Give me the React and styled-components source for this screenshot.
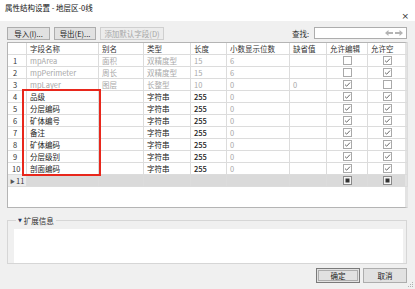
import React from "react";
import styled, { createGlobalStyle } from "styled-components";

const Global = createGlobalStyle`
  html, body { margin: 0; padding: 0; }
  body {
    width: 415px; height: 289px; overflow: hidden;
    background: #f0f0f0;
    font-family: "Noto Sans CJK SC", "Noto Sans", sans-serif;
    font-size: 7.5px;
    color: #222;
  }
  * { box-sizing: border-box; }
`;

const Window = styled.div`
  width: 415px;
  height: 289px;
  display: flex;
  flex-direction: column;
  background: #f0f0f0;
  position: relative;
`;

const TitleBar = styled.div`
  height: 21px;
  display: flex;
  align-items: flex-start;
  justify-content: space-between;
  padding: 3px 6px 0 5px;
  background: #ffffff;
  color: #111;
  font-size: 7.5px;
  line-height: 10px;
`;

const Close = styled.span`
  margin-top: 9px;
  font-size: 9px;
  line-height: 8px;
  color: #333;
  font-family: "DejaVu Sans", sans-serif;
`;

const Toolbar = styled.div`
  display: flex;
  align-items: center;
  gap: 4px;
  padding: 5px 8px 0 7px;
  height: 19px;
`;

const Btn = styled.button`
  height: 13px;
  width: ${(p) => p.$w}px;
  padding: 0;
  border: 1px solid ${(p) => (p.$disabled ? "#cfcfcf" : p.$default ? "#7a7a7a" : "#adadad")};
  outline: ${(p) => (p.$default ? "1px solid #adadad" : "none")};
  outline-offset: -3px;
  background: ${(p) => (p.$disabled ? "#ececec" : "#e1e1e1")};
  color: ${(p) => (p.$disabled ? "#a6a6a6" : "#222")};
  font-family: inherit;
  font-size: 7.5px;
  line-height: 11px;
`;

const Spacer = styled.div`
  flex: 1;
`;

const FindLabel = styled.span`
  color: #333;
  margin-right: 1px;
`;

const FindBox = styled.div`
  width: 93px;
  height: 12px;
  background: #fff;
  border: 1px solid #adadad;
  display: flex;
  align-items: center;
  justify-content: flex-end;
  padding-right: 3px;
  gap: 2px;
`;

const Table = styled.div`
  margin: 2px 7px 0 7px;
  height: 166px;
  background: #fff;
  border: 1px solid #b4b4b4;
  border-right: 3px solid #e3e3e3;
  display: flex;
  flex-direction: column;
  position: relative;
`;

const cols = "19px 72px 45px 47px 36px 63px 37px 41px 40px";

const Row = styled.div`
  display: grid;
  grid-template-columns: ${cols};
  height: 12px;
  background: ${(p) => (p.$new ? "#dadada" : "#fff")};
`;

const Cell = styled.div`
  border-right: 1px solid #dcdcdc;
  border-bottom: 1px solid #dcdcdc;
  padding-left: ${(p) => (p.$pl != null ? p.$pl : 3)}px;
  line-height: 11px;
  white-space: nowrap;
  overflow: hidden;
  color: ${(p) => p.$c || "#222"};
  font-weight: ${(p) => (p.$bold ? 500 : 400)};
  display: flex;
  align-items: center;
  justify-content: ${(p) => (p.$center ? "center" : "flex-start")};
  background: ${(p) => p.$bg || "transparent"};
`;

const HeadCell = styled(Cell)`
  color: #333;
`;

const Num = styled(Cell)`
  color: #333;
`;

const Arrow = styled.span`
  font-size: 5px;
  margin-left: -2px;
  margin-right: 1px;
  color: #555;
`;

const Annotation = styled.div`
  position: absolute;
  left: 14px;
  top: 46px;
  width: 79px;
  height: 87px;
  border: 2.5px solid #e8271c;
  pointer-events: none;
`;

const Group = styled.fieldset`
  margin: 8px 8px 0 7px;
  padding: 0 3px 3px 6px;
  height: 48px;
  border: 1px solid #d6d6d6;
  min-width: 0;
`;

const Legend = styled.legend`
  padding: 0 2px;
  margin-left: 2px;
  color: #333;
  line-height: 9px;
  display: flex;
  align-items: center;
  gap: 2px;
`;

const Tri = styled.span`
  font-size: 5px;
  color: #1d3566;
  font-family: "DejaVu Sans", sans-serif;
`;

const GroupBody = styled.div`
  background: #fff;
  height: 34px;
  margin-top: 4px;
`;

const Footer = styled.div`
  display: flex;
  justify-content: flex-end;
  gap: 3px;
  padding: 4px 8px 0 0;
`;

const FootBtn = styled(Btn)`
  height: 15px;
  line-height: 12px;
`;

const Grip = styled.svg`
  position: absolute;
  right: 1px;
  bottom: 1px;
`;

function Check({ on, mixed }) {
  return (
    <svg width="9" height="9" viewBox="0 0 9 9">
      <rect x="0.5" y="0.5" width="8" height="8" fill={mixed ? "#f4f4f4" : "#fff"} stroke={mixed ? "#8a8a8a" : "#a9a9a9"} />
      {on && <path d="M2 4.6 L3.7 6.2 L7 2.6" fill="none" stroke="#6a6a6a" strokeWidth="1" />}
      {mixed && <rect x="2.5" y="2.5" width="4" height="4" fill="#333" />}
    </svg>
  );
}

function NavArrow({ dir }) {
  const d = dir === "left" ? "M0 3 L3.5 0 L3.5 2 L8 2 L8 4 L3.5 4 L3.5 6 Z" : "M8 3 L4.5 0 L4.5 2 L0 2 L0 4 L4.5 4 L4.5 6 Z";
  return (
    <svg width="8" height="6" viewBox="0 0 8 6">
      <path d={d} fill="#b4b4b4" />
    </svg>
  );
}

const rows = [
  { n: 1, name: "mpArea", alias: "面积", type: "双精度型", len: "15", dec: "6", def: "", edit: false, nul: true, sys: true },
  { n: 2, name: "mpPerimeter", alias: "周长", type: "双精度型", len: "15", dec: "6", def: "", edit: false, nul: true, sys: true },
  { n: 3, name: "mpLayer", alias: "图层", type: "长整型", len: "10", dec: "0", def: "0", edit: true, nul: false, sys: true },
  { n: 4, name: "品级", alias: "", type: "字符串", len: "255", dec: "0", def: "", edit: true, nul: true },
  { n: 5, name: "分层编码", alias: "", type: "字符串", len: "255", dec: "0", def: "", edit: true, nul: true },
  { n: 6, name: "矿体编号", alias: "", type: "字符串", len: "255", dec: "0", def: "", edit: true, nul: true },
  { n: 7, name: "备注", alias: "", type: "字符串", len: "255", dec: "0", def: "", edit: true, nul: true },
  { n: 8, name: "矿体编码", alias: "", type: "字符串", len: "255", dec: "0", def: "", edit: true, nul: true },
  { n: 9, name: "分层级别", alias: "", type: "字符串", len: "255", dec: "0", def: "", edit: true, nul: true },
  { n: 10, name: "剖面编码", alias: "", type: "字符串", len: "255", dec: "0", def: "", edit: true, nul: true },
];

const heads = ["", "字段名称", "别名", "类型", "长度", "小数显示位数", "缺省值", "允许编辑", "允许空"];

export default function App() {
  const gray = "#a8a8a8";
  return (
    <Window>
      <Global />
      <TitleBar>
        <span>属性结构设置 - 地层区-0线</span>
        <Close>×</Close>
      </TitleBar>
      <Toolbar>
        <Btn $w={43}>导入(I)...</Btn>
        <Btn $w={42}>导出(E)...</Btn>
        <Btn $w={64} $disabled>添加默认字段(D)</Btn>
        <Spacer />
        <FindLabel>查找:</FindLabel>
        <FindBox>
          <NavArrow dir="left" />
          <NavArrow dir="right" />
        </FindBox>
      </Toolbar>
      <Table>
        <Row>
          {heads.map((h, i) => (
            <HeadCell key={i}>{h}</HeadCell>
          ))}
        </Row>
        {rows.map((r) => (
          <Row key={r.n}>
            <Num $pl={r.n >= 10 ? 4 : 5}>{r.n}</Num>
            <Cell $c={r.sys ? gray : "#222"}>{r.name}</Cell>
            <Cell $c={gray}>{r.alias}</Cell>
            <Cell $c={r.sys ? gray : "#222"}>{r.type}</Cell>
            <Cell $c={r.sys ? gray : "#222"} $bold={!r.sys}>{r.len}</Cell>
            <Cell $c={gray}>{r.dec}</Cell>
            <Cell $c={gray}>{r.def}</Cell>
            <Cell $center $pl={0}><Check on={r.edit} /></Cell>
            <Cell $center $pl={0}><Check on={r.nul} /></Cell>
          </Row>
        ))}
        <Row $new>
          <Num $pl={4} $bg="#ececec"><Arrow>▶</Arrow>11</Num>
          <Cell />
          <Cell />
          <Cell />
          <Cell />
          <Cell />
          <Cell />
          <Cell $center $pl={0}><Check mixed /></Cell>
          <Cell $center $pl={0}><Check mixed /></Cell>
        </Row>
        <Annotation />
      </Table>
      <Group>
        <Legend><Tri>▼</Tri>扩展信息</Legend>
        <GroupBody />
      </Group>
      <Footer>
        <FootBtn $w={44} $default>确定</FootBtn>
        <FootBtn $w={44}>取消</FootBtn>
      </Footer>
      <Grip width="6" height="6" viewBox="0 0 6 6">
        <rect x="4" y="0" width="1" height="1" fill="#b0b0b0" />
        <rect x="2" y="2" width="1" height="1" fill="#b0b0b0" />
        <rect x="4" y="2" width="1" height="1" fill="#b0b0b0" />
        <rect x="0" y="4" width="1" height="1" fill="#b0b0b0" />
        <rect x="2" y="4" width="1" height="1" fill="#b0b0b0" />
        <rect x="4" y="4" width="1" height="1" fill="#b0b0b0" />
      </Grip>
    </Window>
  );
}
